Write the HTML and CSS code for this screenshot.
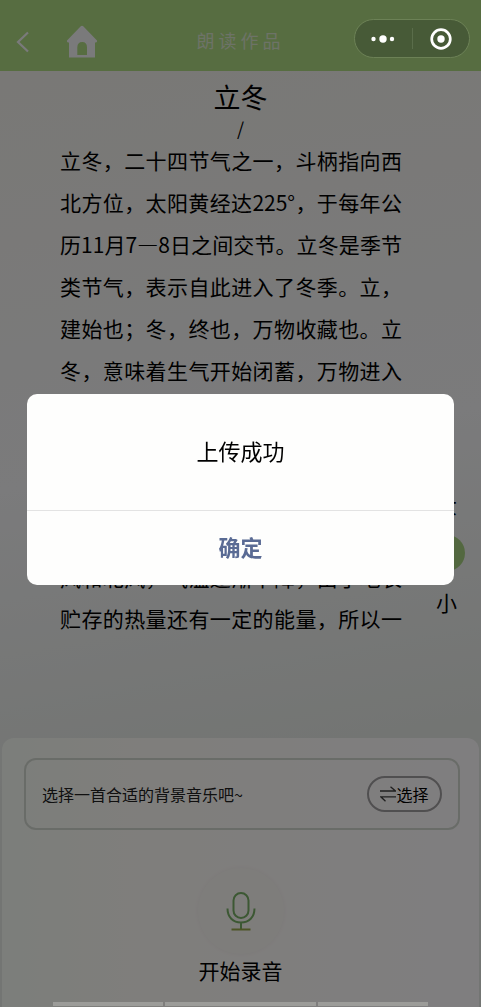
FILE: index.html
```html
<!DOCTYPE html>
<html lang="zh-CN">
<head>
<meta charset="utf-8">
<meta name="viewport" content="width=device-width, initial-scale=1">
<title>朗读作品</title>
<link rel="stylesheet" href="styles.css">
</head>
<body>
<div class="page">
  <header class="topbar">
    <button class="icon-button" type="button" aria-label="返回">
      <svg width="14" height="22" viewBox="0 0 14 22"><path d="M12 1.500 2 11l10 9.500" fill="none" stroke="currentColor" stroke-width="2.200"/></svg>
    </button>
    <button class="icon-button home" type="button" aria-label="首页">
      <svg width="32" height="34" viewBox="0 0 32 34"><path fill="currentColor" fill-rule="evenodd" d="M14.500 1.500Q16 .2 17.500 1.500L31 15.500Q31.500 17.500 29 17.500V32.500H3V17.500Q.5 17.500 1 15.500ZM11.300 30H21V22.500Q21 17 16.200 17T11.300 22.500Z"/></svg>
    </button>
    <h1 class="topbar-title">朗读作品</h1>
  </header>

  <main class="reader">
    <div class="work-heading">
      <h2 class="work-title">立冬</h2>
      <p class="work-author">/</p>
    </div>
    <article class="work-text">
      <p class="verse">立冬，二十四节气之一，斗柄指向西<br>北方位，太阳黄经达225°，于每年公<br>历11月7—8日之间交节。立冬是季节<br>类节气，表示自此进入了冬季。立，<br>建始也；冬，终也，万物收藏也。立<br>冬，意味着生气开始闭蓄，万物进入</p>
      <p class="verse verse-next">休养、收藏状态。其气候也由少雨干<br>燥的秋季向阴雨寒冻的冬季渐变。立<br>冬后，日照时间将继续缩短，正午太<br>阳高度继续降低。冬季盛行东北季风<br>风和北风，气温逐渐下降，由于地表<br>贮存的热量还有一定的能量，所以一</p>
    </article>
    <aside class="text-size" aria-label="字号">
      <span>大</span>
      <button class="size-knob" type="button" aria-label="调整字号"></button>
      <span>小</span>
    </aside>
  </main>

  <section class="recorder">
    <div class="music">
      <span class="music-hint">选择一首合适的背景音乐吧~</span>
      <button class="music-pick" type="button">
        <svg width="16" height="16" viewBox="0 0 16 16"><path d="M0 5h15.500L10.500.8M16 10.800H.8L5.500 15.300" fill="none" stroke="#404040" stroke-width="1.300"/></svg>
        <span>选择</span>
      </button>
    </div>
    <button class="record" type="button">
      <span class="record-disc">
        <svg width="30" height="40" viewBox="0 0 30 40" fill="none" stroke="#78b066" stroke-width="2"><rect x="7.500" y="2" width="15" height="25" rx="7.500"/><path d="M1.500 17.500C1.500 26 7 31.500 15 31.500S28.500 26 28.500 17.500M15 31.500V38"/><path d="M5.500 38.500h19" stroke="#99a84a"/></svg>
      </span>
      <span>开始录音</span>
    </button>
  </section>
</div>

<div class="capsule">
  <button class="capsule-button" type="button" aria-label="更多">
    <svg width="24" height="10" viewBox="0 0 24 10" fill="#fff"><circle cx="2.500" cy="5" r="2.200"/><circle cx="12" cy="5" r="3.700"/><circle cx="21" cy="5" r="2.200"/></svg>
  </button>
  <button class="capsule-button capsule-close" type="button" aria-label="关闭">
    <svg width="22" height="22" viewBox="0 0 22 22"><circle cx="11" cy="11" r="9.300" fill="none" stroke="#fff" stroke-width="2.700"/><circle cx="11" cy="11" r="3.700" fill="#fff"/></svg>
  </button>
</div>

<div class="mask">
  <div class="dialog" role="alertdialog" aria-labelledby="dialog-message">
    <p class="dialog-message" id="dialog-message">上传成功</p>
    <button class="dialog-confirm" type="button">确定</button>
  </div>
</div>

<div class="bottom-strip"><span></span><span class="wide"></span><span></span></div>
</body>
</html>
```
FILE: styles.css
```css
* { box-sizing: border-box; }

body {
  margin: 0;
  font-family: "Noto Sans CJK SC", "Noto Sans", sans-serif;
  color: #000;
}

h1, h2, p { margin: 0; font-weight: 400; }

button {
  margin: 0;
  padding: 0;
  border: 0;
  background: none;
  font: inherit;
  color: inherit;
}

svg { display: block; flex: none; }

.page {
  display: flex;
  flex-direction: column;
  min-height: 100vh;
  background: linear-gradient(170deg, #f2f0ea 0%, #f6f6f8 45%, #e6eae6 75%);
}

.topbar {
  display: grid;
  grid-template-columns: 32px 32px 1fr 32px 32px;
  column-gap: 18px;
  align-items: center;
  height: 71px;
  padding: 12px 16px 0;
  background: #aeda82;
  color: #f4f4f6;
}

.icon-button { display: flex; }

.topbar-title {
  padding-bottom: 3px;
  font-size: 18px;
  line-height: 24px;
  letter-spacing: 4px;
  text-align: center;
  color: #dbe6ce;
}

.reader {
  flex: 1;
  display: grid;
  grid-template-columns: 60px 1fr 79px;
  grid-template-rows: auto 1fr;
}

.work-heading {
  grid-column: 1 / -1;
  text-align: center;
}

.work-title {
  padding-top: 5px;
  font-size: 27px;
  line-height: 42px;
}

.work-author {
  font-size: 18px;
  line-height: 21px;
}

.work-text { grid-column: 2; }

.verse {
  font-size: 21px;
  line-height: 42px;
  text-align: justify;
  text-align-last: justify;
}

.verse-next {
  padding-top: 2px;
  line-height: 41px;
}

.text-size {
  display: flex;
  flex-direction: column;
  align-items: center;
  gap: 15px;
  padding: 349px 0 0 10px;
  font-size: 21px;
  line-height: 32px;
}

.size-knob {
  width: 36px;
  height: 36px;
  border-radius: 50%;
  background: #a6d080;
}

.recorder {
  display: flex;
  flex-direction: column;
  margin: 0 2px;
  padding: 20px 19px 21px 22px;
  border-radius: 12px 12px 0 0;
  background: linear-gradient(90deg, #f8fcf6, #fffcf8 30%, #fffcff);
}

.music {
  display: flex;
  align-items: center;
  justify-content: space-between;
  height: 72px;
  padding: 0 16px;
  border: 2px solid #d3d8d1;
  border-radius: 12px;
}

.music-hint { font-size: 16px; color: #202020; }

.music-pick {
  display: flex;
  align-items: center;
  justify-content: center;
  width: 75px;
  height: 36px;
  border: 2px solid #a09ea0;
  border-radius: 18px;
  font-size: 16px;
}

.record {
  display: flex;
  flex-direction: column;
  align-items: center;
  align-self: center;
  margin-right: 3px;
  padding-top: 38px;
  font-size: 21px;
  line-height: 32px;
}

.record-disc {
  display: grid;
  place-items: center;
  width: 86px;
  height: 86px;
  border-radius: 50%;
  background: #fdfaf7;
  box-shadow: 0 0 4px #f5f2ef;
}

.mask {
  position: fixed;
  inset: 0;
  display: flex;
  align-items: center;
  padding: 0 27px 28px;
  background: rgba(0, 0, 0, 0.5);
}

.dialog {
  flex: 1;
  border-radius: 10px;
  overflow: hidden;
  background: #fefefd;
}

.dialog-message {
  padding: 40px 20px 44px;
  font-size: 22px;
  line-height: 32px;
  text-align: center;
}

.dialog-confirm {
  width: 100%;
  height: 75px;
  padding-bottom: 4px;
  border-top: 1px solid #e3e3e3;
  font-size: 22px;
  font-weight: 700;
  color: #5a6b94;
}

.capsule {
  position: fixed;
  z-index: 1;
  top: 19px;
  right: 11px;
  display: flex;
  width: 116px;
  height: 39px;
  padding: 8px 0;
  border: 1px solid #6c8156;
  border-radius: 20px;
  background: #475a37;
}

.capsule-button {
  flex: 1;
  display: flex;
  align-items: center;
  justify-content: center;
}

.capsule-close { border-left: 1px solid #5a6d4a; }

.bottom-strip {
  position: fixed;
  bottom: 1px;
  left: 0;
  right: 0;
  display: flex;
  gap: 2px;
  padding: 0 53px;
}

.bottom-strip span {
  flex: 8;
  height: 4px;
  background: #9c9c99;
}

.bottom-strip .wide { flex: 11; }
```
